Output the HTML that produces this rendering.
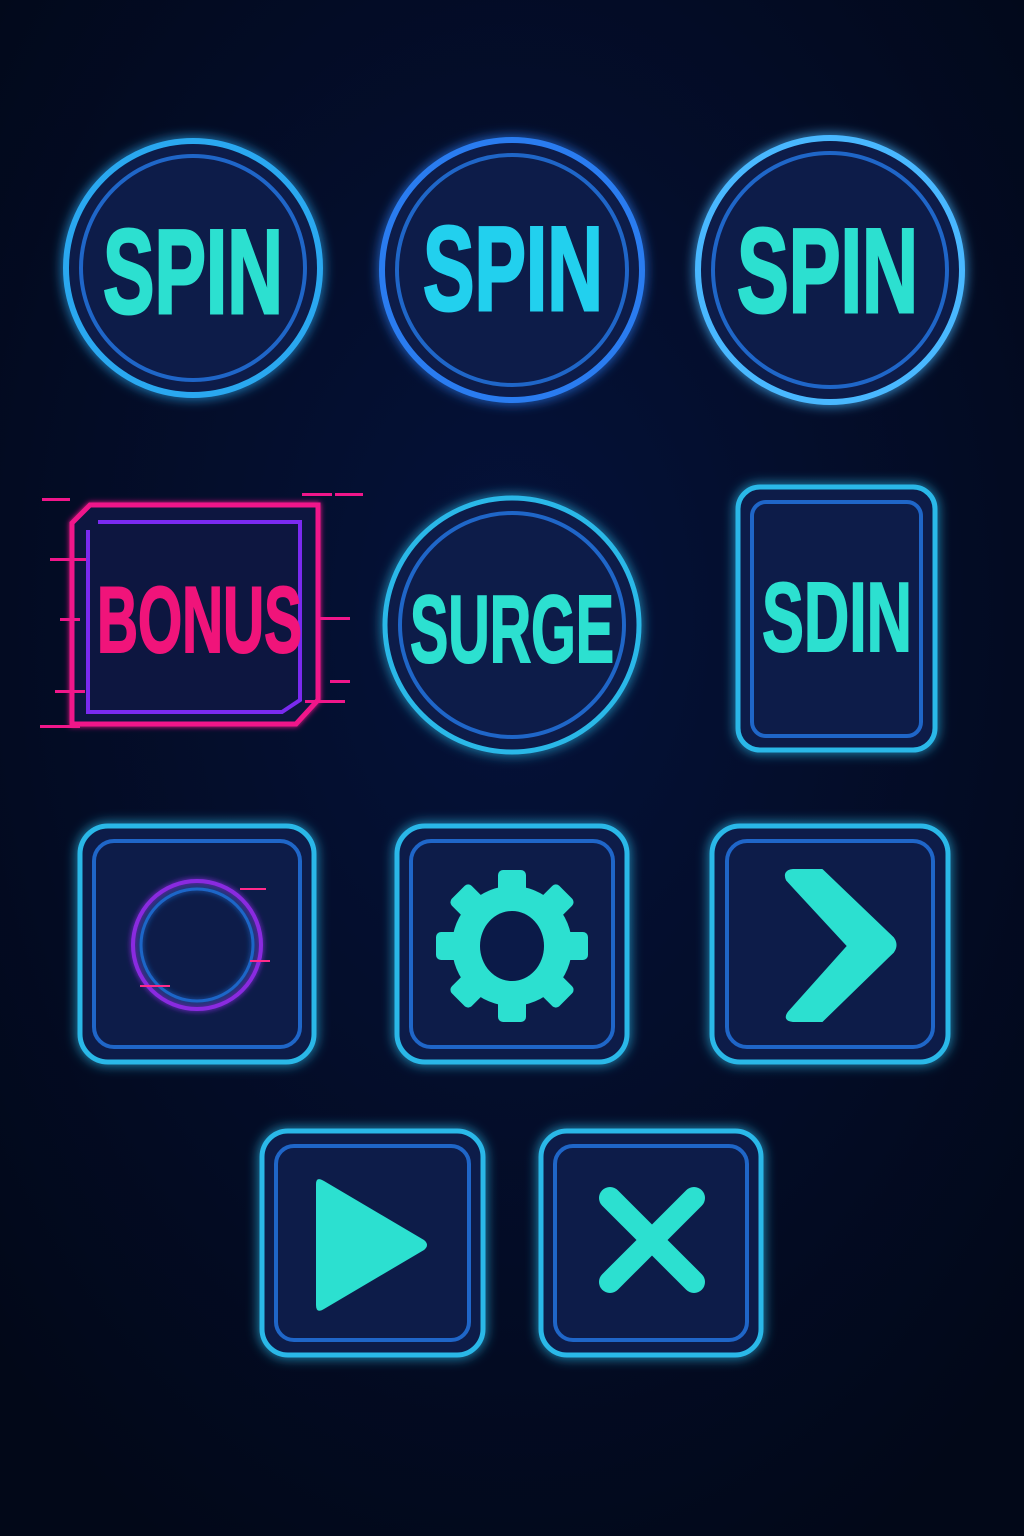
<!DOCTYPE html>
<html><head><meta charset="utf-8"><style>
html,body{margin:0;padding:0;background:#030a20;}
svg{display:block}
text{font-family:"Liberation Sans Narrow","Liberation Sans",sans-serif;font-weight:bold}
</style></head><body>
<svg width="1024" height="1536" viewBox="0 0 1024 1536" xmlns="http://www.w3.org/2000/svg">
<defs>
<filter id="g" x="-30%" y="-30%" width="160%" height="160%"><feGaussianBlur stdDeviation="6" result="b"/><feMerge><feMergeNode in="b"/><feMergeNode in="SourceGraphic"/></feMerge></filter>
<filter id="g2" x="-30%" y="-30%" width="160%" height="160%"><feGaussianBlur stdDeviation="3" result="b"/><feMerge><feMergeNode in="b"/><feMergeNode in="SourceGraphic"/></feMerge></filter>
<radialGradient id="bg" cx="50%" cy="40%" r="70%"><stop offset="0" stop-color="#05123a"/><stop offset="1" stop-color="#020818"/></radialGradient>
</defs>
<rect width="1024" height="1536" fill="url(#bg)"/>

<g filter="url(#g)">
<circle cx="193" cy="268" r="127" fill="#0b1a48" stroke="#2aa8f0" stroke-width="6"/>
<circle cx="512" cy="270" r="130" fill="#0b1a48" stroke="#2a7cf0" stroke-width="6"/>
<circle cx="830" cy="270" r="132" fill="#0b1a48" stroke="#4ab8ff" stroke-width="6"/>
</g>
<g fill="none" stroke="#1f66c8" stroke-width="4">
<circle cx="193" cy="268" r="112"/><circle cx="512" cy="270" r="115"/><circle cx="830" cy="270" r="117"/>
</g>
<g fill="#2ce0d0" stroke="#2ce0d0" stroke-width="3" font-size="120">
<text x="103" y="313" textLength="180" lengthAdjust="spacingAndGlyphs">SPIN</text>
<text x="423" y="310" textLength="180" lengthAdjust="spacingAndGlyphs" fill="#22d0ee" stroke="#22d0ee">SPIN</text>
<text x="737" y="312" textLength="181" lengthAdjust="spacingAndGlyphs">SPIN</text>
</g>

<g filter="url(#g2)">
<path d="M90,505 L318,505 L318,700 L296,724 L72,724 L72,523 Z" fill="#0b1440" stroke="#f0168a" stroke-width="5"/>
<path d="M98,522 L300,522 L300,700 L282,712 L88,712 L88,530" fill="none" stroke="#7a2cf0" stroke-width="4"/>
</g>
<g fill="#f0168a">
<rect x="50" y="558" width="36" height="3"/><rect x="42" y="498" width="28" height="3"/><rect x="302" y="493" width="30" height="3"/><rect x="335" y="493" width="28" height="3"/>
<rect x="320" y="617" width="30" height="3"/><rect x="305" y="700" width="40" height="3"/><rect x="40" y="725" width="40" height="3"/><rect x="55" y="690" width="30" height="3"/>
<rect x="330" y="680" width="20" height="3"/><rect x="60" y="618" width="20" height="3"/>
</g>
<text x="97" y="652" font-size="94" fill="#f0147a" stroke="#f0147a" stroke-width="2" textLength="205" lengthAdjust="spacingAndGlyphs">BONUS</text>

<g filter="url(#g)"><circle cx="512" cy="625" r="127" fill="#0b1a48" stroke="#2ab8e8" stroke-width="5"/></g>
<circle cx="512" cy="625" r="112" fill="none" stroke="#1f66c8" stroke-width="4"/>
<text x="410" y="662" font-size="96" fill="#2ce0d0" stroke="#2ce0d0" stroke-width="2" textLength="204" lengthAdjust="spacingAndGlyphs">SURGE</text>

<g filter="url(#g)"><rect x="738" y="487" width="197" height="263" rx="22" fill="#0b1a48" stroke="#2ab8e8" stroke-width="5"/></g>
<rect x="752" y="502" width="169" height="234" rx="14" fill="none" stroke="#1f66c8" stroke-width="4"/>
<text x="762" y="651" font-size="98" fill="#2ce0d0" stroke="#2ce0d0" stroke-width="2" textLength="150" lengthAdjust="spacingAndGlyphs">SDIN</text>

<g filter="url(#g)" fill="#0b1a48" stroke="#2ab8e8" stroke-width="5">
<rect x="80" y="826" width="234" height="236" rx="28"/>
<rect x="397" y="826" width="230" height="236" rx="28"/>
<rect x="712" y="826" width="236" height="236" rx="28"/>
<rect x="262" y="1131" width="221" height="224" rx="26"/>
<rect x="541" y="1131" width="220" height="224" rx="26"/>
</g>
<g fill="none" stroke="#1f66c8" stroke-width="4">
<rect x="94" y="841" width="206" height="206" rx="20"/>
<rect x="411" y="841" width="202" height="206" rx="20"/>
<rect x="727" y="841" width="206" height="206" rx="20"/>
<rect x="276" y="1146" width="193" height="194" rx="18"/>
<rect x="555" y="1146" width="192" height="194" rx="18"/>
</g>
<g filter="url(#g2)" fill="none">
<circle cx="197" cy="945" r="64" stroke="#8a2ce0" stroke-width="4"/>
<circle cx="197" cy="945" r="56" stroke="#1f66c8" stroke-width="3"/>
</g>
<g fill="#ff2a8a"><rect x="240" y="888" width="26" height="2"/><rect x="140" y="985" width="30" height="2"/><rect x="250" y="960" width="20" height="2"/></g>

<g fill="#2ce0d0">
<g transform="translate(512,946)">
<circle r="60"/>
<rect x="-14" y="-76" width="28" height="30" rx="5"/>
<rect x="-14" y="-76" width="28" height="30" rx="5" transform="rotate(45)"/>
<rect x="-14" y="-76" width="28" height="30" rx="5" transform="rotate(90)"/>
<rect x="-14" y="-76" width="28" height="30" rx="5" transform="rotate(135)"/>
<rect x="-14" y="-76" width="28" height="30" rx="5" transform="rotate(180)"/>
<rect x="-14" y="-76" width="28" height="30" rx="5" transform="rotate(225)"/>
<rect x="-14" y="-76" width="28" height="30" rx="5" transform="rotate(270)"/>
<rect x="-14" y="-76" width="28" height="30" rx="5" transform="rotate(315)"/>
<ellipse rx="32" ry="35" fill="#0b1a48"/>
</g>
<path d="M787,880 Q783,871 793,870 L822,870 L893,938 Q898,945 893,952 L822,1021 L793,1021 Q783,1020 789,1012 L848,946 Z" stroke="#2ce0d0" stroke-width="2" stroke-linejoin="round"/>
<path d="M316,1184 Q316,1176 324,1181 L424,1240 Q430,1245 424,1250 L324,1309 Q316,1314 316,1305 Z"/>
</g>
<g stroke="#2ce0d0" stroke-width="22" stroke-linecap="round">
<line x1="610" y1="1198" x2="694" y2="1282"/><line x1="694" y1="1198" x2="610" y2="1282"/>
</g>
</svg>
</body></html>
